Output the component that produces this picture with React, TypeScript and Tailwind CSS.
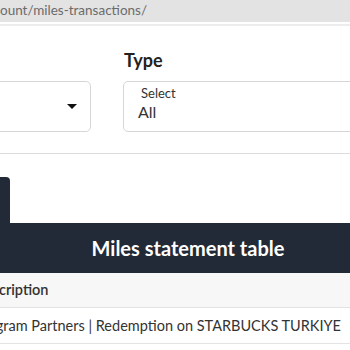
import React from "react";

export default function App() {
  return (
    <div className="w-[350px] h-[350px] overflow-hidden bg-white relative" style={{ fontFamily: 'Lato, "Open Sans", sans-serif' }}>
      {/* URL bar */}
      <div className="h-[22px] bg-[#e3e3e3] flex items-center">
        <span className="text-[13.5px] text-[#6b6b6b] leading-none -mt-[1px] whitespace-nowrap">ount/miles-transactions/</span>
      </div>
      <div className="h-[2px] bg-white" />
      <div className="h-[2px] bg-[#ececec]" />

      {/* Filters */}
      <div className="flex gap-[32px] ml-[-120px] pt-[23px]">
        <div className="w-[211px] shrink-0 flex flex-col">
          <div className="h-[32px]" />
          <div className="h-[51px] border border-[#d6d6d6] rounded-[5px] flex items-center justify-end pr-[13px]">
            <svg width="10" height="6" viewBox="0 0 10 6"><path d="M0 0 L10 0 L5 5 Z" fill="#111" /></svg>
          </div>
        </div>
        <div className="w-[300px] shrink-0 flex flex-col">
          <div className="h-[32px] text-[18px] font-bold text-[#222] leading-none pl-[1px] pt-[2px]">Type</div>
          <div className="h-[51px] border border-[#d6d6d6] rounded-[5px] flex flex-col pl-[14px] pt-[3px]">
            <span className="text-[13px] text-[#333] leading-[16px] pl-[3px]">Select</span>
            <span className="text-[16px] text-[#333] leading-[21px]">All</span>
          </div>
        </div>
      </div>

      <div className="h-[1px] bg-[#dcdcdc] mt-[21px]" />

      {/* Tab */}
      <div className="mt-[23px] h-[46px] w-[10px] bg-[#222a37] rounded-tr-[4px]" />

      {/* Dark band */}
      <div className="h-[50px] bg-[#222a37] ml-[-50px] w-[476px] flex items-center justify-center">
        <span className="text-white text-[20px] font-bold">Miles statement table</span>
      </div>

      {/* Table */}
      <div className="ml-[-26px] w-[420px]">
        <div className="h-[35px] bg-[#f7f7f7] border-b border-[#e3e3e3] flex items-center">
          <span className="text-[14.5px] font-semibold text-[#333]">Description</span>
        </div>
        <div className="h-[36px] border-b border-[#e3e3e3] flex items-center">
          <span className="text-[14.5px] text-[#333] whitespace-nowrap">Program Partners | Redemption on STARBUCKS TURKIYE</span>
        </div>
      </div>
    </div>
  );
}
